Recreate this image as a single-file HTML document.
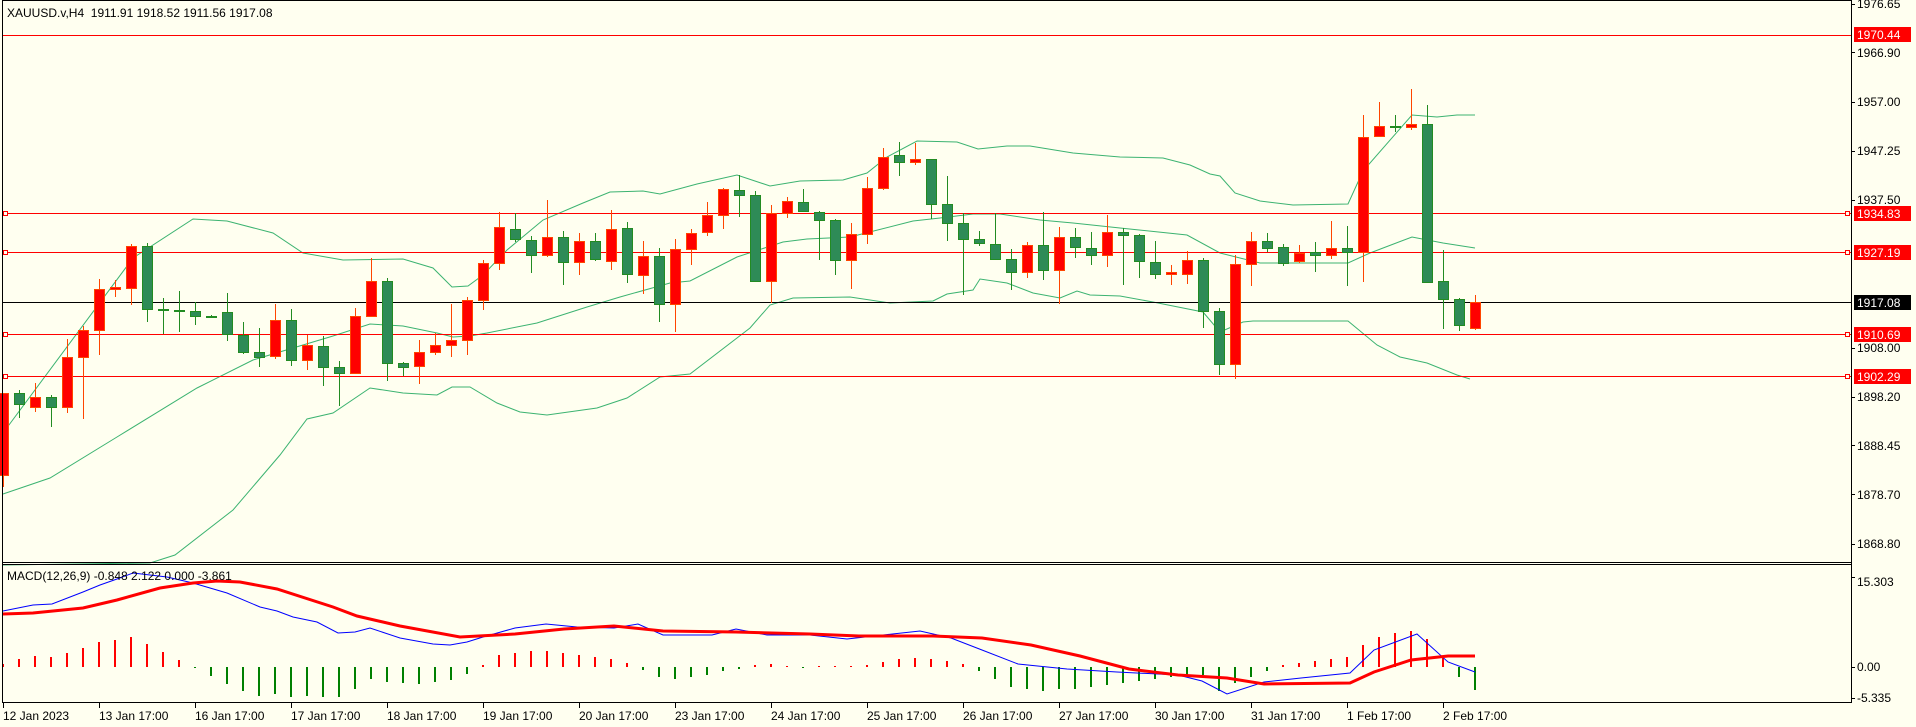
<!DOCTYPE html>
<html><head><meta charset="utf-8">
<style>
html,body{margin:0;padding:0;background:#FFFFF0;width:1916px;height:727px;overflow:hidden}
svg{display:block}
text{font-family:"Liberation Sans",Arial,sans-serif;font-size:12px;fill:#000}
</style></head>
<body>
<svg id="s" width="1916" height="727" xmlns="http://www.w3.org/2000/svg" shape-rendering="crispEdges">
<rect x="0" y="0" width="1916" height="727" fill="#FFFFF0"/>
<g id="bands" fill="none" stroke="#3CB371" stroke-width="1" shape-rendering="auto"></g>
<g id="hl"></g>
<g id="candles"></g>
<g id="macd"></g>
<!-- borders -->
<line x1="2" y1="0.5" x2="1852" y2="0.5" stroke="#000"/>
<line x1="2.5" y1="0" x2="2.5" y2="703" stroke="#000"/>
<line x1="1851.5" y1="0" x2="1851.5" y2="703" stroke="#000"/>
<line x1="2" y1="562.5" x2="1852" y2="562.5" stroke="#000"/>
<line x1="2" y1="564.5" x2="1852" y2="564.5" stroke="#000"/>
<line x1="2" y1="702.5" x2="1852" y2="702.5" stroke="#000"/>
<text x="7" y="17">XAUUSD.v,H4&#160;&#160;1911.91 1918.52 1911.56 1917.08</text>
<text x="7" y="580">MACD(12,26,9) -0.848 2.122 0.000 -3.861</text>
<g id="axis"></g>
<!-- price labels -->
<g>
<text x="1857" y="8">1976.65</text>
<text x="1857" y="57">1966.90</text>
<text x="1857" y="106">1957.00</text>
<text x="1857" y="155">1947.25</text>
<text x="1857" y="204">1937.50</text>
<text x="1857" y="352">1908.00</text>
<text x="1857" y="401">1898.20</text>
<text x="1857" y="450">1888.45</text>
<text x="1857" y="499">1878.70</text>
<text x="1857" y="548">1868.80</text>
<text x="1857" y="586">15.303</text>
<text x="1857" y="671">0.00</text>
<text x="1857" y="702">-5.335</text>
</g>
<g>
<rect x="1854" y="27" width="57" height="15" fill="#FF0000"/><text x="1857" y="39" style="fill:#fff">1970.44</text>
<rect x="1854" y="206" width="57" height="15" fill="#FF0000"/><text x="1857" y="218" style="fill:#fff">1934.83</text>
<rect x="1854" y="245" width="57" height="15" fill="#FF0000"/><text x="1857" y="257" style="fill:#fff">1927.19</text>
<rect x="1854" y="295" width="57" height="15" fill="#000"/><text x="1857" y="307" style="fill:#fff">1917.08</text>
<rect x="1854" y="327" width="57" height="15" fill="#FF0000"/><text x="1857" y="339" style="fill:#fff">1910.69</text>
<rect x="1854" y="369" width="57" height="15" fill="#FF0000"/><text x="1857" y="381" style="fill:#fff">1902.29</text>
</g>
<!-- time labels -->
<g>
<text x="3" y="720">12 Jan 2023</text>
<text x="99" y="720">13 Jan 17:00</text>
<text x="195" y="720">16 Jan 17:00</text>
<text x="291" y="720">17 Jan 17:00</text>
<text x="387" y="720">18 Jan 17:00</text>
<text x="483" y="720">19 Jan 17:00</text>
<text x="579" y="720">20 Jan 17:00</text>
<text x="675" y="720">23 Jan 17:00</text>
<text x="771" y="720">24 Jan 17:00</text>
<text x="867" y="720">25 Jan 17:00</text>
<text x="963" y="720">26 Jan 17:00</text>
<text x="1059" y="720">27 Jan 17:00</text>
<text x="1155" y="720">30 Jan 17:00</text>
<text x="1251" y="720">31 Jan 17:00</text>
<text x="1347" y="720">1 Feb 17:00</text>
<text x="1443" y="720">2 Feb 17:00</text>
</g>
</svg>
<script>
var NS="http://www.w3.org/2000/svg";
function el(p,t,a){var e=document.createElementNS(NS,t);for(var k in a)e.setAttribute(k,a[k]);p.appendChild(e);return e;}
var C=[
['r',393.3,475.3,393,486.7],['g',393.3,404.3,390,417.7],['r',397.3,407.3,383,411.7],['g',397.3,407.3,395,426.7],
['r',357.3,407.3,339,413.3],['r',330.3,357.3,325.7,419.3],['r',289.3,330.3,279,354.7],['r',287.3,289.3,280,296.7],
['r',246.3,288.3,244,304.7],['g',246.3,309.3,243,321.7],['g',309.3,310.3,298,334],['g',310.3,311.3,291,331.7],
['g',311.3,316.3,302.3,324.7],['g',316,316.7,315,316.7],['g',312.3,333.7,293,340.7],['g',334.7,351.7,322,353.7],
['g',352.3,357.3,328,366.7],['r',320.3,356.3,304,358.7],['g',320.3,360.3,309,365.7],['r',345.3,360.3,335.3,369.7],
['g',346.3,367.3,336.3,385.7],['g',367.3,373.3,361,405.7],['r',316.3,373.3,308,373.3],['r',281.3,316.3,258.3,317.3],
['g',281.3,363.3,278,380.7],['g',363.3,367.3,361.7,376],['r',352.3,366.3,340,383.7],['r',345.3,352.3,333.3,354.7],
['r',340.3,345.3,303.7,356.7],['r',300.3,340.3,297,354.7],['r',263.3,300.3,260,309.7],['r',227.3,263.3,212,269.7],
['g',229.3,239.3,213.3,241.7],['g',240.3,255.3,236.3,272.7],['r',237.3,255.3,200,256.7],['g',237.3,262.3,231,284.7],
['r',241.3,262.3,233,274.7],['g',241.3,259.3,233,260.7],['r',229.3,261.3,210,269.7],['g',228.3,274.3,222,282.7],
['r',256.3,275.3,241,293.7],['g',256.3,304.3,248,321.7],['r',249.3,304.3,239,331.7],['r',233.3,249.3,229,264.7],
['r',215.3,232.3,202,235.7],['r',189.3,215.3,188,228.7],['g',190.3,195.3,175,216.7],['g',195.3,281.3,191,281.3],
['r',213.3,281.3,205,302.7],['r',201.3,213.3,197.3,217.7],['g',202.3,211.3,189,212.3],['g',212.3,220.3,211,259.7],
['g',220.3,260.3,219,274.7],['r',234.3,260.3,223,288.7],['r',188.3,234.3,177,243.7],['r',157.3,188.3,148,189.7],
['g',155.3,162.3,142,175.7],['r',159.3,162.3,143,164.7],['g',159.3,204.3,159.3,219],['g',204.3,223.3,176,240.7],
['g',223.3,239.3,213.3,295.3],['g',239.3,243.3,231,245.7],['g',244.3,259.3,213.3,259.3],['g',259.3,272.3,249,289.7],
['r',245.3,272.3,242,277.7],['g',245.3,270.3,212,279.7],['r',237.3,270.3,227,304.3],['g',237.3,247.3,228,257.7],
['g',248.3,255.3,232,264.7],['r',232.3,255.3,215,266.7],['g',232.3,235.3,227.7,284.7],['g',235.3,261.3,233.7,277.7],
['g',262.3,274.3,241.3,278.7],['r',272.3,274.3,265.3,284.7],['r',260.3,274.3,251.3,283.7],['g',260.3,311.3,258.3,328.3],
['g',311.3,364.3,308.3,375.3],['r',264.3,364.3,255.3,379.3],['r',241.3,264.3,232.3,285.7],['g',241.3,248.3,233.3,252.3],
['g',247.3,262.7,244.3,265.7],['r',253.3,261.3,245.3,263.3],['g',252.3,255.3,242.3,271.7],['r',248.3,255.3,221.3,259.3],
['g',248.3,252.3,226,285.7],['r',137.3,252.3,115.3,282.3],['r',126.3,136.3,102.3,136.3],['g',126.3,127.3,115.3,132.3],
['r',124.3,127.3,89.3,130.3],['g',124.3,281.7,105.3,282.7],['g',281.3,299.3,250.3,329.3],['g',299.3,325.3,298.3,331.3],
['r',302.3,328.3,295.3,330.3]];
var cg=document.getElementById('candles');
C.forEach(function(c,i){
  var x=3+16*i, r=c[0]=='r';
  var wc=r?'#FF4500':'#228B22';
  var bt=Math.round(c[1]),bb=Math.round(c[2]);if(bb-bt<1)bb=bt+1;
  el(cg,'line',{x1:x+0.5,x2:x+0.5,y1:Math.round(c[3]),y2:Math.round(c[4]),stroke:wc});
  el(cg,'rect',{x:x-4.5,y:bt+0.5,width:10,height:bb-bt,fill:r?'#FF0000':'#2E8B57',stroke:wc});
});
// bands
var bg=document.getElementById('bands');
var U=[[3,433],[133,258],[193,219],[227,221],[273,233],[303,253],[343,260],[403,259],[433,268],[452,287],[468,286],[483,275],[507,250],[543,220],[583,203],[610,192],[643,191],[660,194],[697,184],[737,175],[770,186],[800,181],[843,180],[867,173],[887,157],[917,141],[957,142],[978,149],[1007,146],[1030,146],[1073,153],[1120,157],[1163,158],[1190,165],[1210,174],[1220,176],[1235,193],[1260,201],[1293,205],[1348,204],[1363,171],[1412,115],[1437,117],[1457,115],[1475,115]];
var M=[[3,494],[50,478],[117,437],[197,388],[253,360],[333,336],[370,324],[403,326],[437,333],[453,337],[470,336],[487,333],[537,323],[587,307],[620,297],[670,283],[690,281],[737,257],[740,256],[783,242],[807,239],[850,237],[913,221],[940,218],[973,214],[1000,214],[1040,220],[1073,223],[1120,228],[1187,235],[1220,253],[1260,263],[1348,263],[1370,253],[1412,237],[1443,243],[1475,248]];
var L=[[3,565],[150,563],[175,555],[233,510],[280,455],[307,419],[333,413],[370,388],[403,393],[437,395],[452,387],[470,387],[497,403],[520,412],[547,415],[597,408],[627,398],[660,377],[690,374],[750,328],[770,305],[793,298],[850,297],[890,303],[933,301],[947,294],[973,290],[980,279],[1007,283],[1033,293],[1060,298],[1077,291],[1090,295],[1120,296],[1153,302],[1203,312],[1220,332],[1243,322],[1253,321],[1348,321],[1377,345],[1400,357],[1427,363],[1457,375],[1470,379]];
[U,M,L].forEach(function(p){el(bg,'polyline',{points:p.map(function(q){return q.join(',')}).join(' ')});});
// horizontal lines
var hg=document.getElementById('hl');
[[35,0],[213,1],[252,1],[334,1],[376,1]].forEach(function(h){
  var y=h[0]+0.5;
  el(hg,'line',{x1:3,x2:1851,y1:y,y2:y,stroke:'#FF0000'});
  if(h[1]){el(hg,'rect',{x:3.5,y:y-2,width:4,height:4,fill:'#FFFFF0',stroke:'#FF0000'});
  el(hg,'rect',{x:1845.5,y:y-2,width:4,height:4,fill:'#FFFFF0',stroke:'#FF0000'});}
});
el(hg,'line',{x1:3,x2:1851,y1:302.5,y2:302.5,stroke:'#000'});
// axis ticks
var ag=document.getElementById('axis');
[3.6,52.4,102,150.9,199.7,347.5,396.6,445.4,494.3,543.9,577,667,698].forEach(function(y){y=Math.round(y)+0.5;el(ag,'line',{x1:1851,x2:1855,y1:y,y2:y,stroke:'#000'});});
for(var k=0;k<16;k++){var x=3+96*k+0.5;el(ag,'line',{x1:x,x2:x,y1:703,y2:708,stroke:'#000'});}
// MACD
var mg=document.getElementById('macd');
var H=[3,8,11,10,14,19,25,27,30,23,15,7,-1,-9,-17,-24,-29,-27,-30,-29,-30,-30,-22,-12,-15,-16,-17,-15,-13,-7,2,12,
14,16,16,14,12,10,8,4,-3,-10,-12,-10,-8,-4,-2,2,3,1,-1,1,1,1,2,5,8,9,8,6,3,-4,-12,-20,-22,-24,-22,-22,-20,-18,-16,-14,-12,-10,-8,-8,-24,-16,-10,-4,2,4,6,8,10,22,30,34,36,28,10,-10,-23];
var z=667;
H.forEach(function(h,i){var x=3+16*i;
  if(h>=0)el(mg,'rect',{x:x-1,y:z-h,width:2,height:Math.max(h,1),fill:'#FF0000'});
  else el(mg,'rect',{x:x-1,y:z,width:2,height:-h,fill:'#008000'});
});
var B=[[3,611],[33,605],[52,604],[83,592],[100,585],[117,579],[133,573],[167,577],[193,583],[227,593],[260,607],[277,611],[293,617],[317,622],[338,633],[355,632],[370,628],[400,638],[433,644],[450,645],[467,642],[483,637],[515,628],[546,624],[577,627],[614,628],[638,624],[663,635],[712,635],[736,629],[767,635],[810,635],[847,639],[883,635],[920,631],[951,638],[982,650],[1018,664],[1067,669],[1117,672],[1178,675],[1202,681],[1227,694],[1264,682],[1301,678],[1350,673],[1374,650],[1417,634],[1448,662],[1475,672]];
var R=[[3,614],[33,613],[83,608],[117,600],[160,588],[193,583],[217,581],[240,582],[277,589],[333,607],[357,616],[400,626],[460,637],[515,634],[564,629],[614,626],[663,631],[736,632],[810,634],[859,636],[933,636],[982,638],[1031,645],[1080,656],[1129,669],[1178,675],[1227,678],[1264,684],[1350,683],[1374,672],[1411,660],[1448,656],[1475,656]];
el(mg,'polyline',{points:B.map(function(q){return q.join(',')}).join(' '),fill:'none',stroke:'#0000FF','stroke-width':1,'shape-rendering':'auto'});
el(mg,'polyline',{points:R.map(function(q){return q.join(',')}).join(' '),fill:'none',stroke:'#FF0000','stroke-width':3,'shape-rendering':'auto'});
</script>
</body></html>
